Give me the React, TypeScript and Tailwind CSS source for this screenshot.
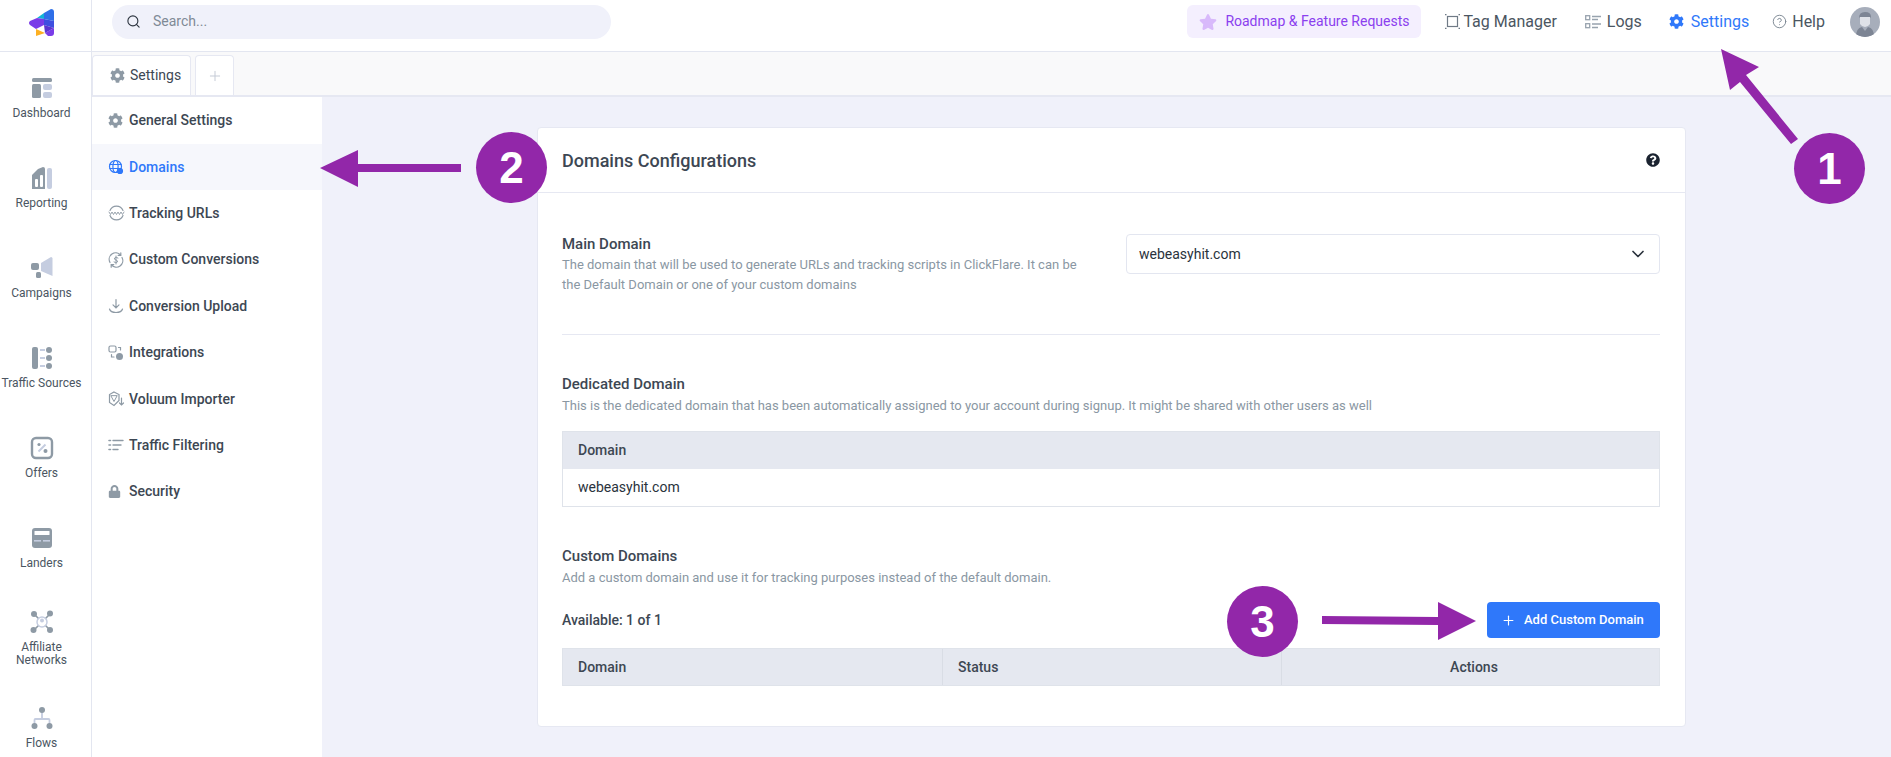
import { ChevronDown, CircleHelp, Plus, Search } from 'lucide-react';
import type { ReactNode } from 'react';
import { FaCog, FaLock, FaQuestionCircle, FaStar } from 'react-icons/fa';

const dark = '#8e9aa5';
const light = '#c5cde0';

function Logo() {
  return (
    <svg width="26" height="27" viewBox="0 0 26 27">
      <path d="M8 9 L15 4 L15 10 Z" fill="#12b5d6" />
      <path d="M15 4 L22 0 Q25 0 25 3 L25 12 L15 10 Z" fill="#2f6fe8" />
      <path d="M1 12 Q-1 14 1 16 L7 20 L15 16 L15 10 L8 9 Z" fill="#7a3ce8" />
      <path d="M15 16 L15 10 L25 12 L25 19 Z" fill="#3f4fe0" />
      <path d="M7 20 L7 27 L16 24 Z" fill="#fdb022" />
      <path d="M16 24 L25 19 L25 24 Q25 27 22 27 L19 27 Z" fill="#7a3ce8" />
      <path d="M15 16 L25 19 L16 24 Z" fill="#5b35d0" />
    </svg>
  );
}

const sideIcons: Record<string, ReactNode> = {
  Dashboard: (
    <svg width="24" height="24" viewBox="0 0 24 24">
      <rect x="2" y="2" width="20" height="4" rx="1.5" fill={dark} />
      <rect x="2" y="8" width="9" height="14" rx="1.5" fill={dark} />
      <rect x="13" y="8" width="9" height="6" rx="2" fill={light} />
      <rect x="13" y="16" width="9" height="6" rx="2" fill={light} />
    </svg>
  ),
  Reporting: (
    <svg width="24" height="24" viewBox="0 0 24 24">
      <path d="M2 9 L8 3 L13 1 Q15 1 15 3 L15 23 L2 23 Z" fill={dark} />
      <rect x="5" y="13" width="3" height="8" rx="1" fill="#fff" />
      <rect x="10" y="9" width="3" height="12" rx="1" fill="#fff" />
      <rect x="17" y="2" width="5" height="21" rx="2" fill={light} />
    </svg>
  ),
  Campaigns: (
    <svg width="24" height="24" viewBox="0 0 24 24">
      <path d="M11 7 L21 1 Q22.5 1 22.5 2.5 L22.5 20 L11 15 Z" fill={light} />
      <rect x="1" y="7" width="8" height="7" rx="2" fill={dark} />
      <rect x="6" y="16" width="5" height="6" rx="1.5" fill={dark} />
    </svg>
  ),
  'Traffic Sources': (
    <svg width="24" height="24" viewBox="0 0 24 24">
      <rect x="2" y="1" width="6" height="22" rx="2" fill={dark} />
      <path d="M10 4 H15 M10 12 H15 M10 20 H15" stroke={light} strokeWidth="2" />
      <circle cx="19" cy="4" r="3" fill={dark} />
      <circle cx="19" cy="12" r="3" fill={dark} />
      <circle cx="19" cy="20" r="3" fill={dark} />
    </svg>
  ),
  Offers: (
    <svg width="24" height="24" viewBox="0 0 24 24">
      <rect x="2" y="2" width="20" height="20" rx="4" fill="none" stroke={dark} strokeWidth="2.4" />
      <path d="M8.5 15.5 L15.5 8.5" stroke={light} strokeWidth="2" />
      <circle cx="9" cy="8.5" r="1.6" fill={dark} />
      <circle cx="15.5" cy="15" r="2" fill={dark} />
    </svg>
  ),
  Landers: (
    <svg width="24" height="24" viewBox="0 0 24 24">
      <rect x="2" y="2" width="20" height="20" rx="3" fill={dark} />
      <rect x="4.5" y="5" width="15" height="4" rx="0.5" fill="#fff" />
      <rect x="4" y="14" width="7" height="1.6" fill={light} />
      <rect x="13" y="14" width="7" height="1.6" fill={light} />
    </svg>
  ),
  'Affiliate Networks': (
    <svg width="24" height="24" viewBox="0 0 24 24">
      <path d="M4 4 L20 20 M20 4 L4 20" stroke={dark} strokeWidth="1.6" />
      <circle cx="4" cy="4" r="3" fill={dark} />
      <circle cx="20" cy="3.5" r="3" fill={dark} />
      <circle cx="3.5" cy="20" r="3" fill={dark} />
      <circle cx="20" cy="20" r="3" fill={dark} />
      <circle cx="12" cy="12" r="5" fill="#fff" stroke={light} strokeWidth="1.5" />
      <circle cx="12" cy="10.5" r="2" fill={light} />
    </svg>
  ),
  Flows: (
    <svg width="24" height="24" viewBox="0 0 24 24">
      <path d="M12 4 V13 M4.5 20 V14 Q4.5 13 5.5 13 H18.5 Q19.5 13 19.5 14 V20" stroke={light} strokeWidth="1.8" fill="none" />
      <circle cx="12" cy="4" r="3" fill={dark} />
      <circle cx="4.5" cy="20" r="3" fill={dark} />
      <circle cx="19.5" cy="20" r="3" fill={dark} />
    </svg>
  ),
};

const sideItems = ['Dashboard', 'Reporting', 'Campaigns', 'Traffic Sources', 'Offers', 'Landers', 'Affiliate Networks', 'Flows'];

const line = { fill: 'none', stroke: '#8e9aa5', strokeWidth: 1.2, strokeLinecap: 'round' as const };

const menuItems: { name: string; icon: ReactNode }[] = [
  { name: 'General Settings', icon: <FaCog size={15} color="#8e9aa5" /> },
  {
    name: 'Domains',
    icon: (
      <svg width="16" height="16" viewBox="0 0 16 16" fill="none" stroke="#2f78fa" strokeWidth="1.2">
        <circle cx="7.5" cy="7.5" r="6" />
        <ellipse cx="7.5" cy="7.5" rx="2.6" ry="6" />
        <path d="M1.5 5.5 H13.5 M1.5 9.5 H13.5" />
        <circle cx="12" cy="12" r="2.5" fill="#2f78fa" />
      </svg>
    ),
  },
  {
    name: 'Tracking URLs',
    icon: (
      <svg width="17" height="16" viewBox="0 0 17 16">
        <path d="M2 5.5 A7 7 0 0 1 15 5.5 M2 10.5 A7 7 0 0 0 15 10.5" {...line} />
        <path d="M1 7 L2.5 9.5 L4 7 L5.5 9.5 L7 7 L8.5 9.5 L10 7 L11.5 9.5 L13 7 L14.5 9.5 L16 7" {...line} strokeWidth={0.9} />
      </svg>
    ),
  },
  {
    name: 'Custom Conversions',
    icon: (
      <svg width="16" height="16" viewBox="0 0 16 16">
        <path d="M2 10.5 A6.5 6.5 0 0 1 12.5 3 M14 5.5 A6.5 6.5 0 0 1 3.5 13" {...line} />
        <path d="M12.8 0.8 V3.4 H10.2 M3.2 15.2 V12.6 H5.8" {...line} />
        <path d="M10 6 Q8 4.6 6.6 6 Q6 7.6 8 8 Q10 8.6 9.4 10 Q8 11.4 6 10 M8 4 V12" {...line} strokeWidth={1} />
      </svg>
    ),
  },
  {
    name: 'Conversion Upload',
    icon: (
      <svg width="16" height="16" viewBox="0 0 16 16">
        <path d="M8 1.5 V9.5 M5 6.8 L8 9.8 L11 6.8" {...line} />
        <path d="M1.5 11 Q2.5 14.5 8 14.5 Q13.5 14.5 14.5 11" {...line} />
      </svg>
    ),
  },
  {
    name: 'Integrations',
    icon: (
      <svg width="16" height="16" viewBox="0 0 16 16">
        <rect x="1" y="1" width="7" height="6" rx="1.5" {...line} />
        <circle cx="11.5" cy="11.5" r="3.5" fill="#8e9aa5" />
        <path d="M10.5 2.5 H12.5 V5 M3.5 9.5 V12 H6" {...line} />
      </svg>
    ),
  },
  {
    name: 'Voluum Importer',
    icon: (
      <svg width="17" height="16" viewBox="0 0 17 16">
        <path d="M6 1 L11 3.5 V9.5 L6 14.5 L1.5 11.5 V3.5 Z" {...line} />
        <path d="M3 5 L6 10.5 L9 5 Z" {...line} strokeWidth={1} />
        <path d="M13.5 7 V14 M11.5 12 L13.5 14 L15.5 12" {...line} />
      </svg>
    ),
  },
  {
    name: 'Traffic Filtering',
    icon: (
      <svg width="16" height="16" viewBox="0 0 16 16">
        <path d="M5 3.5 H15 M5 8 H13 M5 12.5 H10" {...line} strokeWidth={1.4} />
        <path d="M1 3.5 H2.5 M1 8 H2.5 M1 12.5 H2.5" {...line} strokeWidth={1.6} />
      </svg>
    ),
  },
  { name: 'Security', icon: <FaLock size={13} color="#8e9aa5" /> },
];

function SideItem({ name }: { name: string }) {
  return (
    <div className="flex h-[90px] flex-col items-center justify-center">
      <div className="h-[24px] w-[24px]">{sideIcons[name]}</div>
      <span className="mt-[7px] w-[83px] text-center text-[12px] leading-[13px] text-[#4b5662]">{name}</span>
    </div>
  );
}

function Overlays() {
  const badge = 'absolute flex h-[71px] w-[71px] items-center justify-center rounded-full bg-[#9227a9] text-[44px] font-bold text-white';
  return (
    <>
      <svg className="pointer-events-none absolute left-0 top-0" width="1891" height="757">
        <g fill="#9227a9">
          <path d="M320 168 L358 150 L358 164 L461 164 L461 172 L358 172 L358 187 Z" />
          <path d="M1476 621 L1438 602 L1438 617 L1322 616 L1322 624 L1438 625 L1438 640 Z" />
          <path d="M1721 49 L1759 67 L1746 75 L1798 139 L1791 144 L1740 82 L1730 90 Z" />
        </g>
      </svg>
      <div className={`${badge} left-[476px] top-[132px]`} style={{ fontFamily: '"Liberation Sans", sans-serif' }}>2</div>
      <div className={`${badge} left-[1794px] top-[133px]`} style={{ fontFamily: '"Liberation Sans", sans-serif' }}>1</div>
      <div className={`${badge} left-[1227px] top-[586px]`} style={{ fontFamily: '"Liberation Sans", sans-serif' }}>3</div>
    </>
  );
}

export default function App() {
  return (
    <div className="relative flex h-screen flex-col overflow-hidden bg-white font-['Roboto',sans-serif] text-[#3d4753]">
      <header className="flex h-[52px] shrink-0 items-center border-b border-[#e3e6f0]">
        <div className="flex h-full w-[92px] items-center justify-center border-r border-[#e3e6f0] pb-[6px] pr-[8px]">
          <Logo />
        </div>
        <div className="mb-[8px] ml-5 flex h-[34px] w-[499px] items-center rounded-full bg-[#f0f1fa] pl-[14px] text-[14px] text-[#7f8a96]">
          <Search size={15} color="#2d3540" strokeWidth={1.8} />
          <span className="ml-[12px]">Search...</span>
        </div>
        <div className="mb-[8px] ml-auto flex items-center pr-[11px]">
          <div className="flex h-[33px] w-[234px] items-center rounded-md bg-[#f4effe] pl-[12px] text-[14px] text-[#8b3fef]">
            <FaStar size={18} color="#d8b9fb" />
            <span className="ml-[8px]">Roadmap &amp; Feature Requests</span>
          </div>
          <div className="ml-[24px] flex items-center text-[16px] text-[#4b5662]">
            <svg width="15" height="15" viewBox="0 0 15 15" fill="none" stroke="#6f7a86" strokeWidth="1.2">
              <rect x="2.5" y="2.5" width="10" height="10" />
              <path d="M0 0.7 H1.5 M0 14.3 H1.5 M13.5 0.7 H15 M13.5 14.3 H15" />
            </svg>
            <span className="ml-[3px]">Tag Manager</span>
          </div>
          <div className="ml-[28px] flex items-center text-[16px] text-[#4b5662]">
            <svg width="16" height="14" viewBox="0 0 16 14" fill="none" stroke="#98a3ae" strokeWidth="1.3">
              <rect x="0.7" y="0.7" width="4" height="4" />
              <rect x="0.7" y="8.7" width="4" height="4" />
              <path d="M7 1.5 H16 M7 4.5 H13 M7 9 H16 M7 12.5 H13" />
            </svg>
            <span className="ml-[6px]">Logs</span>
          </div>
          <div className="ml-[27px] flex items-center text-[16px] text-[#2f78fa]">
            <FaCog size={15} />
            <span className="ml-[7px]">Settings</span>
          </div>
          <div className="ml-[23px] flex items-center text-[16px] text-[#4b5662]">
            <CircleHelp size={15} color="#7a8591" strokeWidth={1.5} />
            <span className="ml-[5px]">Help</span>
          </div>
          <div className="ml-[25px] flex h-[30px] w-[30px] items-center justify-center overflow-hidden rounded-full bg-[#a7aebb]">
            <svg width="30" height="30" viewBox="0 0 30 30">
              <path d="M9 11 Q9 5 15 5 Q21 5 21 10 L20 11 L10 10 Z" fill="#7d8594" />
              <path d="M10 10 H20 V17 Q18 20 15 20 Q12 20 10 17 Z" fill="#dfe2e8" />
              <path d="M6 30 Q6 21 12 20 L15 24 L18 20 Q24 21 24 30 Z" fill="#7d8594" />
            </svg>
          </div>
        </div>
      </header>

      <div className="flex min-h-0 flex-1">
        <aside className="w-[92px] shrink-0 border-r border-[#e3e6f0] pr-[8px] pt-[1px]">
          {sideItems.map((name) => (
            <SideItem key={name} name={name} />
          ))}
        </aside>

        <div className="flex min-w-0 flex-1 flex-col">
          <div className="flex h-[45px] shrink-0 items-end gap-[4px] border-b-2 border-[#e6e8f2] bg-[#f9f9fa]">
            <div className="flex h-[40px] w-[99px] items-center rounded-t-[4px] border border-b-0 border-[#e6e8f2] bg-white pl-[17px] text-[14px] text-[#3d4753]">
              <FaCog size={15} color="#8e9aa5" />
              <span className="ml-[5px]">Settings</span>
            </div>
            <div className="flex h-[40px] w-[39px] items-center justify-center rounded-t-[4px] border border-b-0 border-[#e6e8f2] bg-white">
              <Plus size={16} color="#c5cbd6" strokeWidth={1.5} />
            </div>
          </div>

          <div className="flex min-h-0 flex-1">
            <nav className="w-[230px] shrink-0 bg-white pt-[0.5px]">
              {menuItems.map((item) => {
                const active = item.name === 'Domains';
                return (
                  <div
                    key={item.name}
                    className={`flex h-[46.4px] items-center pl-[16px] text-[14px] font-medium ${active ? 'bg-[#f6f7fc] text-[#2f78fa]' : 'text-[#3d4753]'}`}
                  >
                    <span className="flex w-[21px] items-center justify-start">{item.icon}</span>
                    {item.name}
                  </div>
                );
              })}
            </nav>

            <main className="min-w-0 flex-1 bg-[#f0f1fa] pl-[215px] pt-[30px]">
              <section className="w-[1149px] rounded-[4px] border border-[#e6e8f2] bg-white">
                <div className="flex h-[65px] items-center justify-between border-b border-[#e6e8f2] pl-[24px] pr-[25px]">
                  <h1 className="text-[18px] font-medium text-[#3d4753]">Domains Configurations</h1>
                  <FaQuestionCircle size={14} color="#1b2330" />
                </div>

                <div className="pb-[40px] pl-[24px] pr-[25px] pt-[41px]">
                  <div className="flex justify-between">
                    <div className="w-[530px]">
                      <h2 className="text-[15px] font-medium leading-[20px]">Main Domain</h2>
                      <p className="mt-[1px] text-[13px] leading-[20px] text-[#8a97a3]">
                        The domain that will be used to generate URLs and tracking scripts in ClickFlare. It can be the Default Domain or one of your custom domains
                      </p>
                    </div>
                    <div className="flex h-[40px] w-[534px] items-center justify-between rounded-[4px] border border-[#e3e6f0] pl-[12px] pr-[11px] text-[14px] text-[#2a323c]">
                      webeasyhit.com
                      <ChevronDown size={20} color="#2a323c" strokeWidth={2} />
                    </div>
                  </div>

                  <div className="mb-[39px] mt-[39px] border-t border-[#e6e8f2]" />

                  <h2 className="text-[15px] font-medium leading-[20px]">Dedicated Domain</h2>
                  <p className="mt-[2px] text-[13px] leading-[20px] text-[#8a97a3]">
                    This is the dedicated domain that has been automatically assigned to your account during signup. It might be shared with other users as well
                  </p>
                  <div className="mt-[15px] border border-[#dfe3ea]">
                    <div className="flex h-[37px] items-center bg-[#e5e8f0] pl-[15px] text-[14px] font-medium">Domain</div>
                    <div className="flex h-[37px] items-center pl-[15px] text-[14px] text-[#2a323c]">webeasyhit.com</div>
                  </div>

                  <h2 className="mt-[39px] text-[15px] font-medium leading-[20px]">Custom Domains</h2>
                  <p className="mt-[2px] text-[13px] leading-[20px] text-[#8a97a3]">
                    Add a custom domain and use it for tracking purposes instead of the default domain.
                  </p>
                  <div className="mt-[14px] flex items-center justify-between">
                    <span className="text-[14px] font-medium">Available: 1 of 1</span>
                    <button className="flex h-[36px] w-[173px] items-center rounded-[4px] bg-[#2f78fa] pl-[14px] text-[13px] font-medium text-white">
                      <Plus size={15} strokeWidth={1.8} />
                      <span className="ml-[8px]">Add Custom Domain</span>
                    </button>
                  </div>
                  <div className="mt-[10px] flex h-[38px] items-center border border-[#dfe3ea] bg-[#e5e8f0] text-[14px] font-medium">
                    <div className="flex h-full w-[380px] items-center border-r border-[#d9dde5] pl-[15px]">Domain</div>
                    <div className="flex h-full w-[339px] items-center border-r border-[#d9dde5] pl-[15px]">Status</div>
                    <div className="flex-1 pl-[7px] text-center">Actions</div>
                  </div>
                </div>
              </section>
            </main>
          </div>
        </div>
      </div>

      <Overlays />
    </div>
  );
}
